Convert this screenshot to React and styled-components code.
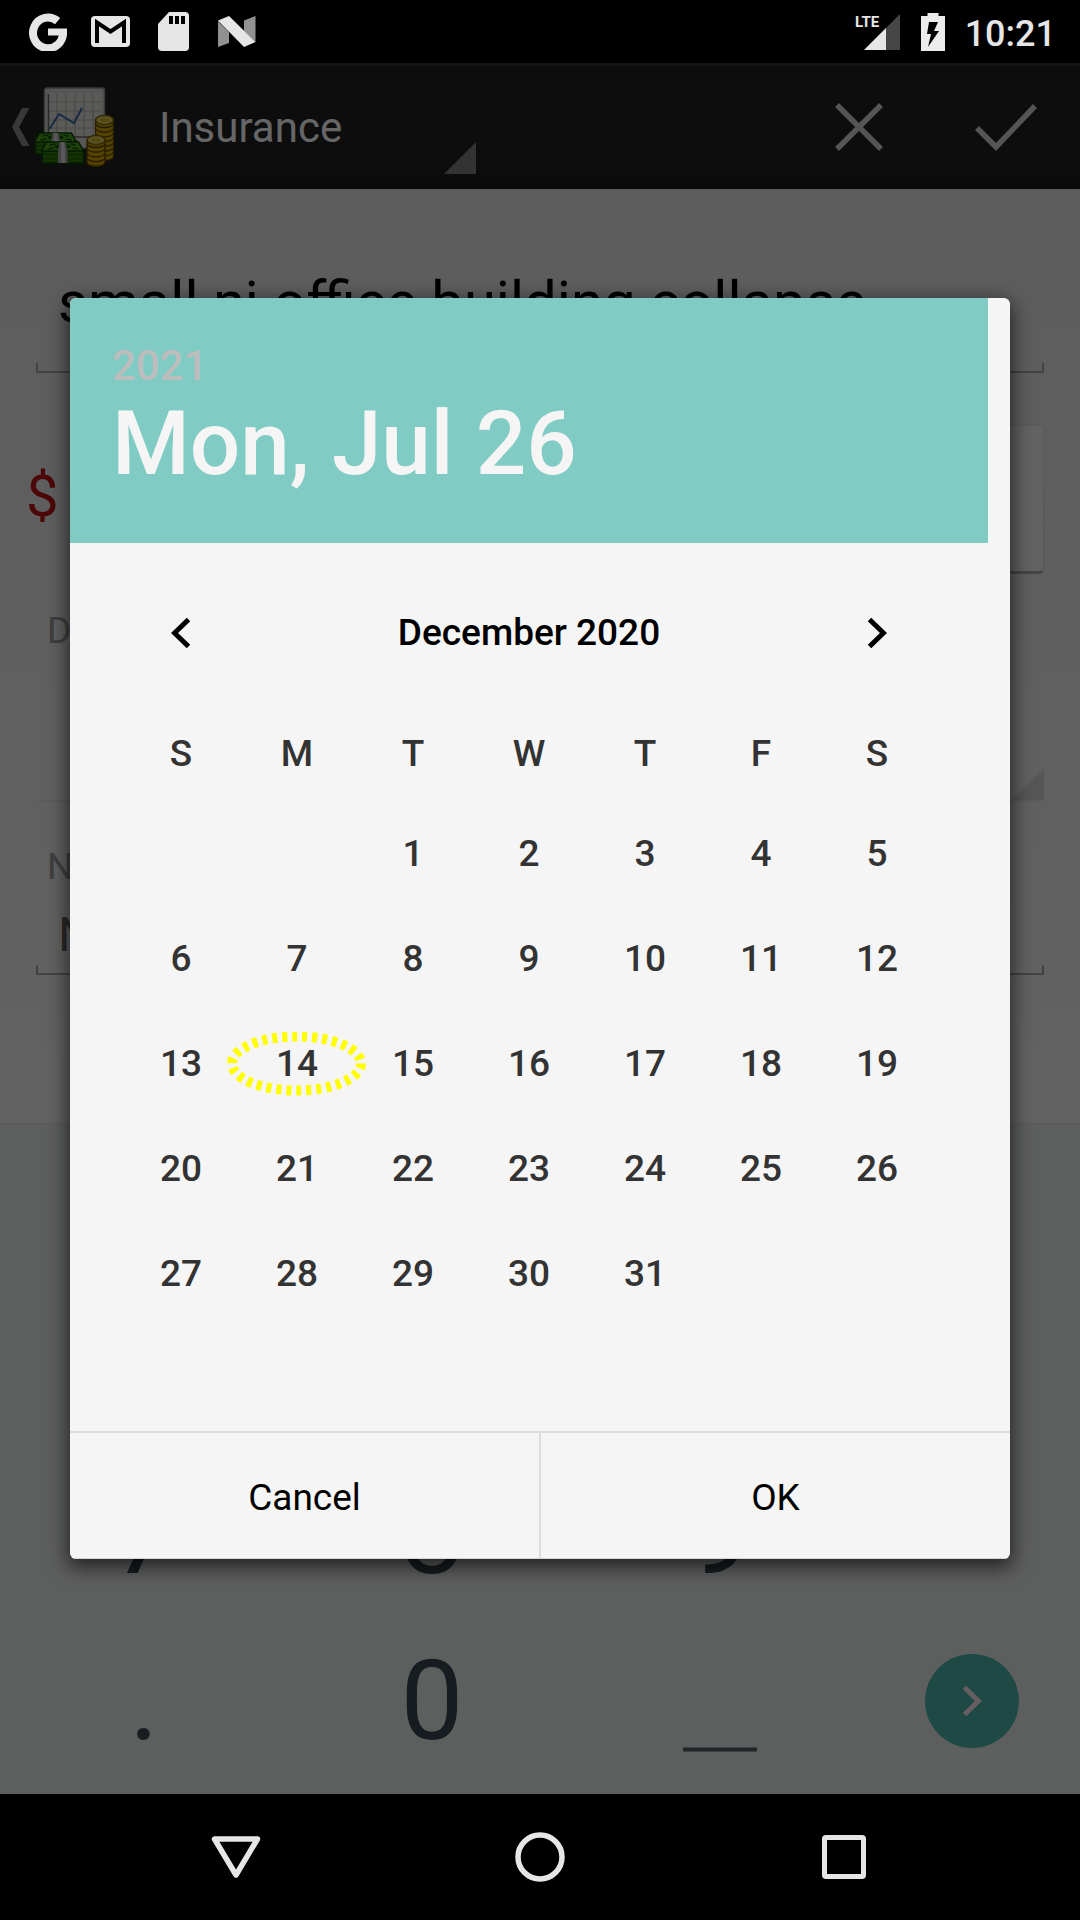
import React from "react";
import styled, { createGlobalStyle } from "styled-components";

const GlobalStyle = createGlobalStyle`
  *, *::before, *::after { box-sizing: border-box; }
  body { margin: 0; background: #000; font-family: Roboto, "Noto Sans", sans-serif; }
  button, input, select { font: inherit; color: inherit; margin: 0; padding: 0; border: 0; background: none; border-radius: 0; outline: none; }
  svg { display: block; flex: none; }
`;

const Screen = styled.div`
  min-height: 100vh;
  display: flex;
  flex-direction: column;
`;

/* ---------- system bars ---------- */

const StatusBar = styled.header`
  height: 63px;
  padding: 0 24px 0 16px;
  display: flex;
  align-items: center;
  justify-content: space-between;
  background: #000;
  color: #e6e6e6;
`;

const Notifications = styled.div`
  display: grid;
  grid-auto-flow: column;
  grid-auto-columns: 63px;
  justify-items: center;
  align-items: center;
`;

const SystemIcons = styled.div`
  display: flex;
  align-items: center;
  gap: 20px;
`;

const Clock = styled.time`
  font-size: 36px;
  line-height: 44px;
  font-weight: 500;
  padding-top: 4px;
`;

const NavBar = styled.nav`
  height: 126px;
  display: flex;
  justify-content: center;
  background: #000;
`;

const NavButton = styled.button`
  flex: 0 1 304px;
  display: flex;
  align-items: center;
  justify-content: center;
`;

/* ---------- app window ---------- */

const AppWindow = styled.div`
  flex: 1;
  display: flex;
  flex-direction: column;
  position: relative;
`;

const ActionBar = styled.div`
  height: 126px;
  display: flex;
  align-items: center;
  background: linear-gradient(#212121 100px, #1a1a1a);
  border-top: 3px solid #373737;
  padding-bottom: 2px;
  color: #fff;
`;

const UpButton = styled.button`
  display: flex;
  align-items: center;
  gap: 5px;
  padding-left: 12px;
`;

const Spinner = styled.div`
  display: grid;
  align-items: center;
  width: 320px;
  height: 94px;
  margin-left: 40px;
  > * { grid-area: 1 / 1; }
  > svg { place-self: end; pointer-events: none; }
`;

const SpinnerSelect = styled.select`
  appearance: none;
  width: 100%;
  padding: 2px 0 0 3px;
  font-size: 42px;
  line-height: 50px;
`;

const Actions = styled.div`
  margin-left: auto;
  display: flex;
  padding-right: 1px;
`;

const ActionButton = styled.button`
  width: 147px;
  height: 100px;
  display: flex;
  align-items: center;
  justify-content: center;
`;

const Form = styled.form`
  flex: 1;
  display: flex;
  flex-direction: column;
  padding-top: 77px;
  background: linear-gradient(#e8e8e8, #f5f5f5);
`;

const LineInput = styled.input`
  margin: 0 36px;
  height: ${(p) => (p.$large ? 107 : 86)}px;
  padding: ${(p) => (p.$large ? "0 22px 36px" : "4px 22px 0")};
  font-size: ${(p) => (p.$large ? 58 : 48)}px;
  line-height: ${(p) => (p.$large ? 68 : 56)}px;
  color: ${(p) => (p.$large ? "#000" : "#666")};
  background:
    linear-gradient(#a8a8a8, #a8a8a8) left bottom / 2px 10px no-repeat,
    linear-gradient(#a8a8a8, #a8a8a8) right bottom / 2px 10px no-repeat,
    linear-gradient(#a8a8a8, #a8a8a8) left bottom / 100% 2px no-repeat;
`;

const AmountRow = styled.div`
  display: flex;
  align-items: center;
  gap: 32px;
  margin: 51px 35px 0 26px;
`;

const Currency = styled.span`
  font-size: 58px;
  line-height: 68px;
  padding-bottom: 6px;
  color: #bf1414;
`;

const AmountButton = styled.button`
  flex: 1;
  height: 150px;
  border-radius: 6px;
  border: 2px solid #e4e4e4;
  border-bottom: 3px solid #b0b0b0;
  background: #f6f6f6;
`;

const FieldLabel = styled.label`
  margin: ${(p) => p.$gap}px 36px 0 47px;
  font-size: 37px;
  line-height: 44px;
  color: #9e9e9e;
`;

const DateField = styled.button`
  margin: 0 36px;
  height: 149px;
  display: flex;
  align-items: flex-end;
  justify-content: flex-end;
  border-bottom: 2px solid #e6e6e6;
`;

const Keypad = styled.div`
  min-height: 671px;
  padding-bottom: 10px;
  display: grid;
  grid-template-columns: 4fr 4fr 4fr 3fr;
  grid-auto-rows: 166px;
  align-content: end;
  background: #e9eeec;
  border-top: 2px solid #e4e8e6;
`;

const Key = styled.button`
  display: flex;
  align-items: center;
  justify-content: center;
  grid-column: ${(p) => p.$col};
  font-size: 112px;
  line-height: 132px;
  color: #37474f;
`;

const NextDisc = styled.span`
  width: 94px;
  height: 94px;
  border-radius: 50%;
  display: flex;
  align-items: center;
  justify-content: center;
  background: #4db6ac;
`;

/* ---------- date picker ---------- */

const Scrim = styled.div`
  position: absolute;
  inset: 0;
  padding: 0 70px;
  display: flex;
  align-items: center;
  justify-content: center;
  background: rgba(0, 0, 0, 0.6);
`;

const Dialog = styled.section`
  flex: 1;
  overflow: hidden;
  border-radius: 6px;
  background: #f5f5f5;
  box-shadow: 0 6px 20px 2px rgba(0, 0, 0, 0.65);
`;

const PickerBody = styled.div`
  padding-right: 22px;
`;

const PickerHeader = styled.div`
  padding: 43px 42px 47px;
  background: #80cbc4;
`;

const Year = styled.div`
  font-size: 42px;
  line-height: 50px;
  font-weight: 500;
  color: #bdbdbd;
`;

const PickedDate = styled.h1`
  margin: 0;
  font-size: 89px;
  line-height: 105px;
  font-weight: 500;
  color: #f5f5f5;
`;

const MonthRow = styled.div`
  display: flex;
  align-items: center;
  justify-content: space-between;
  height: 164px;
  padding: 16px 53px 0;
`;

const MonthButton = styled.button`
  width: 116px;
  height: 96px;
  display: flex;
  align-items: center;
  justify-content: center;
`;

const MonthName = styled.h2`
  margin: 0;
  font-size: 37px;
  line-height: 44px;
  font-weight: 500;
  color: #000;
`;

const Calendar = styled.table`
  width: calc(100% - 106px);
  margin: 0 53px 105px;
  table-layout: fixed;
  border-collapse: collapse;
  font-size: 37px;
  line-height: 44px;
  color: #333;
  th { height: 94px; padding: 0; font-weight: 500; }
  td { height: 105px; padding: 0; }
`;

const Day = styled.button`
  width: 100%;
  height: 105px;
  display: grid;
  place-items: center;
  font-weight: 500;
  > * { grid-area: 1 / 1; }
  > svg { margin: 0 -12px; }
`;

const DialogActions = styled.div`
  display: flex;
  border-top: 2px solid #dcdcdc;
  border-bottom: 1px solid #d4d6d5;
`;

const DialogButton = styled.button`
  flex: 1;
  height: 125px;
  font-size: 37px;
  line-height: 44px;
  padding-top: 4px;
  color: #000;
  & + & { border-left: 2px solid #dcdcdc; }
`;

/* ---------- icons ---------- */

const GoogleIcon = () => (
  <svg width="38" height="38" viewBox="0 0 38 38" fill="none" stroke="#e6e6e6">
    <path d="M28.6 8.1A15 15.3 0 1 0 34 19" strokeWidth="8" />
    <path d="M19 19H38" strokeWidth="7" />
  </svg>
);

const MailIcon = () => (
  <svg width="39" height="31" viewBox="0 0 39 31">
    <rect width="39" height="31" rx="4" fill="#e6e6e6" />
    <path d="M6 27V6.5L19.5 15.5 33 6.5V27" fill="none" stroke="#000" strokeWidth="4" />
  </svg>
);

const SdIcon = () => (
  <svg width="31" height="39" viewBox="0 0 31 39">
    <path d="M11 0H27a4 4 0 0 1 4 4V35a4 4 0 0 1-4 4H4a4 4 0 0 1-4-4V12Z" fill="#e6e6e6" />
    <path d="M11 4h4v8h-4zM17 4h4v8h-4zM23 4h4v8h-4z" fill="#000" />
  </svg>
);

const NougatIcon = () => (
  <svg width="39" height="31" viewBox="0 0 39 31">
    <path d="M1 5V31L12 27V16ZM27 4.5 38.500 0V26L27 15Z" fill="#919191" />
    <path d="M1 4.500 12 0 38.500 26 27 31Z" fill="#e6e6e6" />
  </svg>
);

const SignalIcon = () => (
  <svg width="46" height="38" viewBox="0 0 46 38">
    <path d="M45 1V37H9Z" fill="#464646" />
    <path d="M31 15V37H9Z" fill="#e6e6e6" />
    <text x="0" y="14" fontFamily="Roboto, sans-serif" fontWeight="700" fontSize="15" fill="#e6e6e6">
      LTE
    </text>
  </svg>
);

const BatteryIcon = () => (
  <svg width="24" height="38" viewBox="0 0 24 38">
    <path d="M6.500 0h11v3H24v35H0V3h6.500Z" fill="#ececec" />
    <path d="M8 9h9l-4 9h5L7 34l3-13H6Z" fill="#000" />
  </svg>
);

const UpCaret = () => (
  <svg width="17" height="38" viewBox="0 0 17 38">
    <path d="M10 0h7.500L7 19 17.500 38H10L0 19Z" fill="#8c8c8c" />
  </svg>
);

const Corner = ({ fill }) => (
  <svg width="32" height="32" viewBox="0 0 32 32">
    <path d="M32 0V32H0Z" fill={fill} />
  </svg>
);

const coinBands = (x, top, count) =>
  Array.from({ length: count }, (_, i) => {
    const y = top + i * 4.7;
    return (
      <path
        key={y}
        d={`M${x} ${y}v3.500a9 4 0 0 0 18 0V${y}Z`}
        fill="#d3a900"
        stroke="#5f4700"
        strokeWidth="1.300"
      />
    );
  }).reverse();

const Bills = ({ x, y }) => (
  <g transform={`translate(${x} ${y})`}>
    <path d="M1 8H42V21H1Z" fill="#2d7d0c" stroke="#123f05" strokeWidth="1.500" />
    <path d="M1 12.500H42M1 17H42" stroke="#1a5508" strokeWidth="1.200" />
    <path d="M5 0H37L42 9H0Z" fill="#4aa51d" stroke="#123f05" strokeWidth="1.500" />
    <path d="M8 3l6-1M6 7l6-1M29 2l5 1M31 6l6 1" stroke="#16520a" strokeWidth="1.500" />
    <ellipse cx="21" cy="4.500" rx="8" ry="2.500" fill="#16520a" />
    <path d="M18 0h6l2 9V21H16.500V9Z" fill="#a8a8a8" />
    <path d="M19.500 0h3l1 9V21h-4V9Z" fill="#dcdcdc" />
  </g>
);

const MoneyIcon = () => (
  <svg width="82" height="80" viewBox="0 0 82 80">
    <rect x="10.500" y="1" width="60" height="60" rx="2.500" fill="#d8d8d4" stroke="#8f8f8f" strokeWidth="1.500" />
    <rect x="14" y="6" width="53" height="44" fill="#e2e2de" />
    <path
      d="M23 7V50M32 7V50M41 7V50M50 7V50M59 7V50M15 15H67M15 24H67M15 33H67M15 41H67"
      stroke="#b4b4b0"
      strokeWidth="1.200"
    />
    <path d="M14.500 7V50H67" fill="none" stroke="#666" strokeWidth="1.500" />
    <path d="M15.500 42 25 27 40 36 48 21" fill="none" stroke="#3c65a8" strokeWidth="2" />
    {coinBands(61.5, 33, 8)}
    <ellipse cx="70.500" cy="33" rx="9" ry="4.500" fill="#e6d568" stroke="#806200" strokeWidth="1.500" />
    <ellipse cx="70.500" cy="33" rx="5.500" ry="2" fill="#cdb52a" />
    <Bills x={0.5} y={46} />
    {coinBands(53, 53, 5)}
    <ellipse cx="62" cy="53" rx="9" ry="4.500" fill="#e6d568" stroke="#806200" strokeWidth="1.500" />
    <ellipse cx="62" cy="53" rx="5.500" ry="2" fill="#cdb52a" />
    <Bills x={7.5} y={55} />
  </svg>
);

const CloseIcon = () => (
  <svg width="48" height="48" viewBox="0 0 48 48">
    <path d="M2 2 46 46M46 2 2 46" stroke="#d4d4d4" strokeWidth="5.500" />
  </svg>
);

const CheckIcon = () => (
  <svg width="62" height="48" viewBox="0 0 62 48">
    <path d="M2 25 21 44 60 3" fill="none" stroke="#d4d4d4" strokeWidth="5.500" />
  </svg>
);

const Chevron = ({ back, color = "#000" }) => (
  <svg width="20" height="32" viewBox="0 0 20 32">
    <path
      d={back ? "M17.500 2.500 3.500 16 17.500 29.500" : "M2.500 2.500 16.500 16 2.500 29.500"}
      fill="none"
      stroke={color}
      strokeWidth="5"
    />
  </svg>
);

const TodayRing = () => (
  <svg width="140" height="64" viewBox="0 0 140 64">
    <ellipse cx="69.500" cy="31.500" rx="64.500" ry="27" fill="none" stroke="#ff0" strokeWidth="10" strokeDasharray="5 5" />
  </svg>
);

const weekdays = ["S", "M", "T", "W", "T", "F", "S"];
const FIRST_WEEKDAY = 2;
const TODAY = 14;
const weeks = Array.from({ length: 5 }, (_, w) =>
  weekdays.map((_, d) => {
    const n = w * 7 + d - FIRST_WEEKDAY + 1;
    return n >= 1 && n <= 31 ? n : null;
  })
);

const keys = ["7", "8", "9", ".", "0"];

export default function App() {
  return (
    <Screen>
      <GlobalStyle />
      <StatusBar>
        <Notifications>
          <GoogleIcon />
          <MailIcon />
          <SdIcon />
          <NougatIcon />
        </Notifications>
        <SystemIcons>
          <SignalIcon />
          <BatteryIcon />
          <Clock>10:21</Clock>
        </SystemIcons>
      </StatusBar>

      <AppWindow>
        <ActionBar>
          <UpButton type="button" aria-label="Up">
            <UpCaret />
            <MoneyIcon />
          </UpButton>
          <Spinner>
            <SpinnerSelect aria-label="Category">
              <option>Insurance</option>
            </SpinnerSelect>
            <Corner fill="#808080" />
          </Spinner>
          <Actions>
            <ActionButton type="button" aria-label="Discard">
              <CloseIcon />
            </ActionButton>
            <ActionButton type="button" aria-label="Save">
              <CheckIcon />
            </ActionButton>
          </Actions>
        </ActionBar>

        <Form>
          <LineInput $large aria-label="Title" defaultValue="small nj office building collapse" />
          <AmountRow>
            <Currency>$</Currency>
            <AmountButton type="button" aria-label="Amount" />
          </AmountRow>
          <FieldLabel $gap={35} htmlFor="date">D</FieldLabel>
          <DateField type="button" id="date">
            <Corner fill="#d8d8d8" />
          </DateField>
          <FieldLabel $gap={43} htmlFor="note">N</FieldLabel>
          <LineInput id="note" defaultValue="N" />
        </Form>

        <Keypad>
          {keys.map((k, i) => (
            <Key type="button" key={k} $col={(i % 3) + 1}>{k}</Key>
          ))}
          <Key type="button" aria-label="Space" $col={3}>
            <svg width="74" height="104" viewBox="0 0 74 104">
              <path d="M0 100.500H74" stroke="#4f5f67" strokeWidth="4" />
            </svg>
          </Key>
          <Key type="button" aria-label="Next" $col={4}>
            <NextDisc>
              <Chevron color="#ffecef" />
            </NextDisc>
          </Key>
        </Keypad>

        <Scrim>
          <Dialog role="dialog" aria-modal="true" aria-labelledby="picked">
            <PickerBody>
              <PickerHeader>
                <Year>2021</Year>
                <PickedDate id="picked">Mon, Jul 26</PickedDate>
              </PickerHeader>
              <MonthRow>
                <MonthButton type="button" aria-label="Previous month">
                  <Chevron back />
                </MonthButton>
                <MonthName>December 2020</MonthName>
                <MonthButton type="button" aria-label="Next month">
                  <Chevron />
                </MonthButton>
              </MonthRow>
              <Calendar>
                <thead>
                  <tr>
                    {weekdays.map((d, i) => (
                      <th key={i} scope="col">{d}</th>
                    ))}
                  </tr>
                </thead>
                <tbody>
                  {weeks.map((week, w) => (
                    <tr key={w}>
                      {week.map((n, d) => (
                        <td key={d}>
                          {n && (
                            <Day type="button">
                              <span>{n}</span>
                              {n === TODAY && <TodayRing />}
                            </Day>
                          )}
                        </td>
                      ))}
                    </tr>
                  ))}
                </tbody>
              </Calendar>
            </PickerBody>
            <DialogActions>
              <DialogButton type="button">Cancel</DialogButton>
              <DialogButton type="button">OK</DialogButton>
            </DialogActions>
          </Dialog>
        </Scrim>
      </AppWindow>

      <NavBar>
        <NavButton type="button" aria-label="Back">
          <svg width="50" height="44" viewBox="0 0 50 44">
            <path d="M3.500 4H46.500L25 40Z" fill="none" stroke="#e6e6e6" strokeWidth="5.500" strokeLinejoin="round" />
          </svg>
        </NavButton>
        <NavButton type="button" aria-label="Home">
          <svg width="50" height="50" viewBox="0 0 50 50">
            <circle cx="25" cy="25" r="22" fill="none" stroke="#e6e6e6" strokeWidth="5.500" />
          </svg>
        </NavButton>
        <NavButton type="button" aria-label="Overview">
          <svg width="44" height="44" viewBox="0 0 44 44">
            <rect x="2.500" y="2.500" width="39" height="39" rx="1.500" fill="none" stroke="#e6e6e6" strokeWidth="5" />
          </svg>
        </NavButton>
      </NavBar>
    </Screen>
  );
}
